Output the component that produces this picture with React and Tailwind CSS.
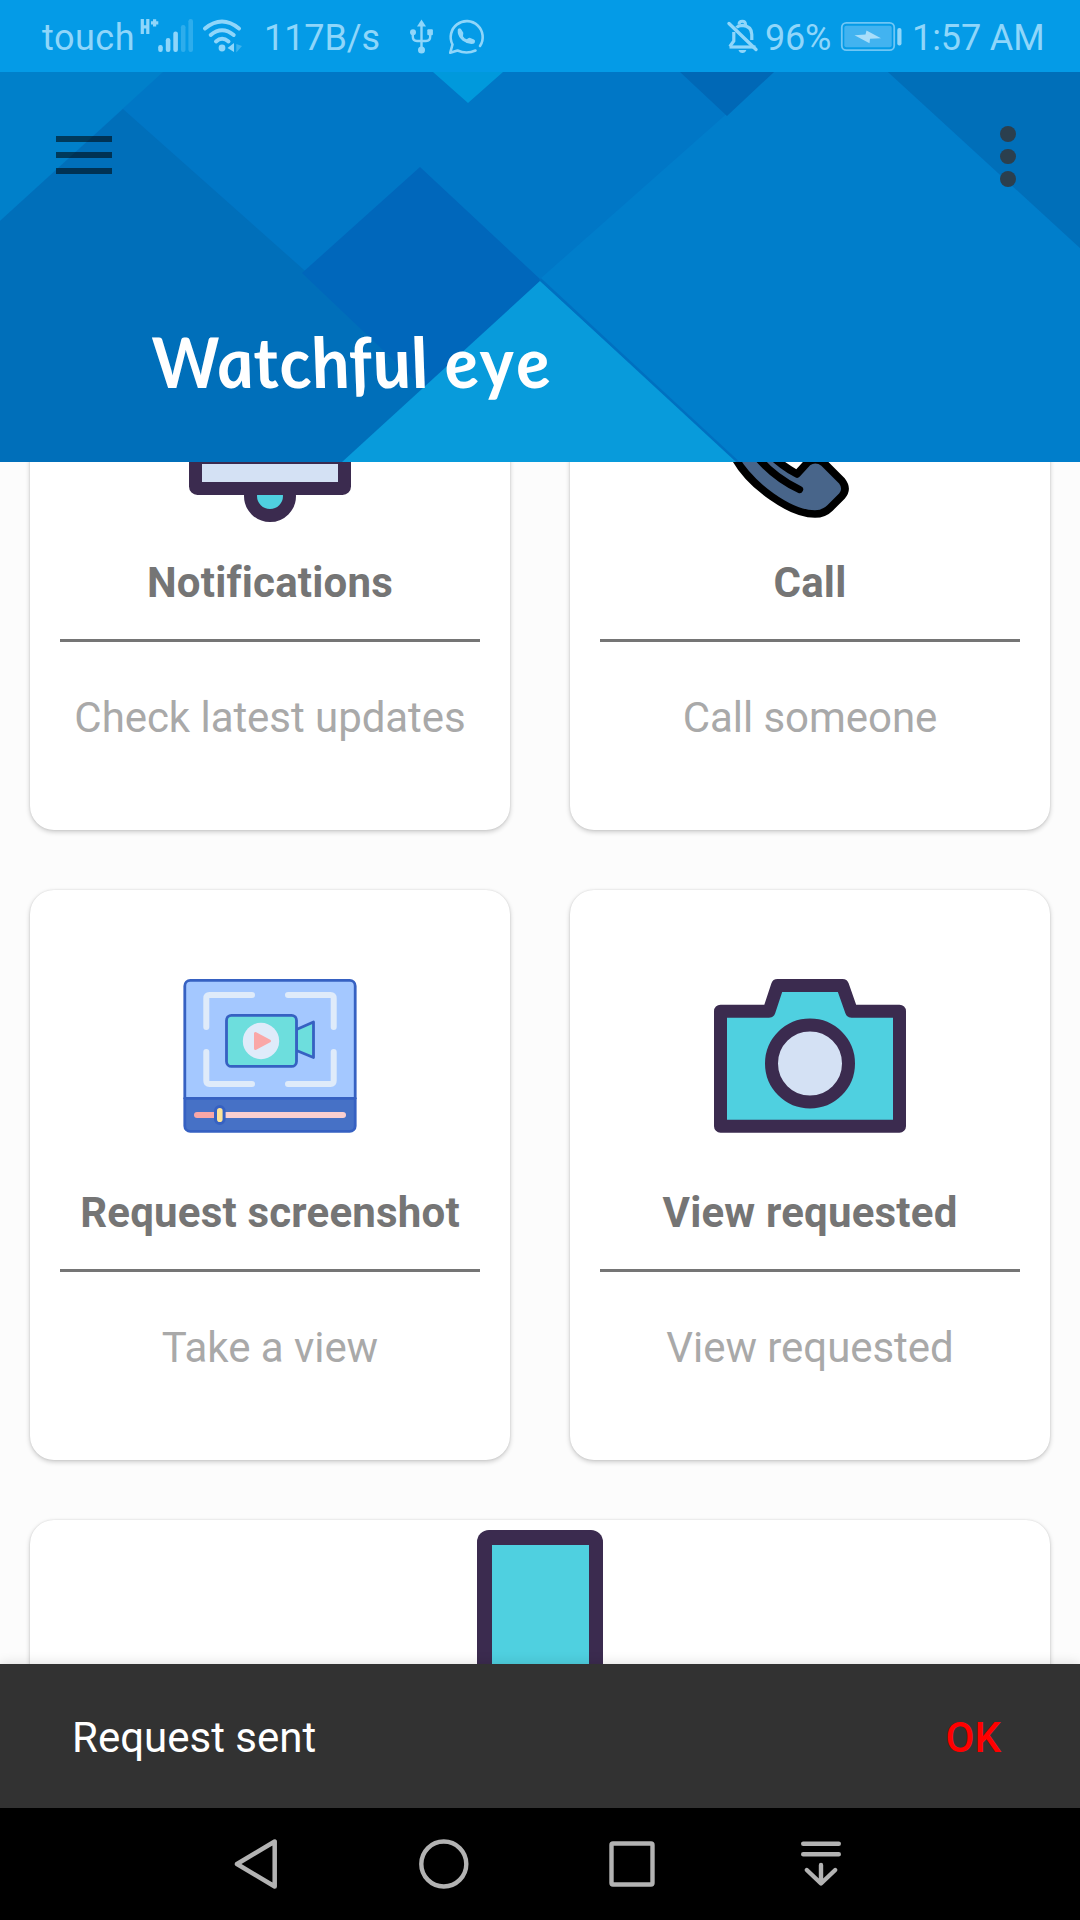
import React from "react";

const TINT = "#8fd6fa";

function SignalIcon() {
  return (
    <svg className="w-14 h-[72px] shrink-0" viewBox="140 0 56 72" fill={TINT}>
      <rect x="158.2" y="45" width="4.6" height="7" rx="2.2" />
      <rect x="165.8" y="38" width="4.6" height="14" rx="2.2" />
      <rect x="173.3" y="31.5" width="4.6" height="20.5" rx="2.2" />
      <rect x="180.900" y="25" width="4.6" height="27" rx="2.2" opacity="0.3" />
      <rect x="188.400" y="19" width="4.6" height="33" rx="2.2" opacity="0.3" />
      <path d="M142.3 19V34M147.8 19V34M142 26.8H148M151 22.800H158.3M154.6 19.3V26.500" stroke={TINT} strokeWidth="3.2" fill="none" />
    </svg>
  );
}

function WifiIcon() {
  return (
    <svg className="w-11 h-[72px] shrink-0" viewBox="200 0 44 72" fill={TINT}>
      <g fill="none" stroke={TINT} strokeWidth="4" strokeLinecap="round">
        <path d="M205 28.5Q222 14.5 239 28.5" />
        <path d="M210.7 35Q222 25.5 233.7 35" />
        <path d="M216 41.5Q222 36 228.5 41.5" />
      </g>
      <circle cx="222" cy="48" r="3.4" />
      <path d="M234 43V52L227.5 48Z" />
      <path d="M236.3 44V52.5L242 46Z" opacity="0.4" />
    </svg>
  );
}

function UsbIcon() {
  return (
    <svg className="w-7 h-[72px] shrink-0" viewBox="408 0 28 72" fill={TINT}>
      <path d="M421.5 19.5L426 26.5H417Z" />
      <path d="M421.5 25V50M412.8 33V36.5Q412.8 41 417 41H426Q430.2 41 430.2 36.5V33" fill="none" stroke={TINT} strokeWidth="2.4" />
      <circle cx="421.5" cy="50" r="3.5" />
      <circle cx="413" cy="32.3" r="3" />
      <rect x="427.3" y="29.3" width="5.6" height="6" rx="1" />
    </svg>
  );
}

function ChatIcon() {
  return (
    <svg className="w-10 h-[72px] shrink-0" viewBox="447 0 40 72" fill="none" stroke={TINT} strokeLinecap="round" strokeLinejoin="round">
      <path d="M480 46A16 16 0 1 0 452.5 44.5L450.2 52.8L457.5 50.5Q466.5 54.5 475.5 50.5" strokeWidth="2.6" />
      <path d="M459.300 30.2Q458.800 35 463.3 39.2Q468.5 43 473 42.2" strokeWidth="3.200" />
      <path d="M459.8 30.5L461.500 33.2L461.2 36M467.5 40.800L469.6 39.6L473.2 41.2" strokeWidth="3.6" />
    </svg>
  );
}

function BellOffIcon() {
  return (
    <svg className="w-9 h-[72px] shrink-0" viewBox="725 0 36 72" fill="none" stroke={TINT}>
      <path d="M729.5 47H755.5" strokeWidth="3.2" />
      <path d="M733.8 32V41L729.8 46.5M736.5 27.5Q738.5 25.3 742.2 25.3Q751.8 26 751.8 34.5V40" strokeWidth="3.2" />
      <path d="M739 24.5Q739 21.3 742.3 21.3Q745.6 21.3 745.6 25" strokeWidth="3" />
      <path d="M738.5 50H746.3Q745.5 53 742.4 53Q739.3 53 738.5 50Z" fill={TINT} stroke="none" />
      <path d="M729 23.5L756 49.5" strokeWidth="3.4" strokeLinecap="round" />
    </svg>
  );
}

function BatteryIcon() {
  return (
    <svg className="w-16 h-[72px] shrink-0" viewBox="840 0 64 72">
      <rect x="841.8" y="22.8" width="52.4" height="27.4" rx="4.5" fill="none" stroke="#6fc6f5" strokeWidth="1.8" />
      <rect x="844.3" y="25.8" width="47.4" height="21.4" rx="2" fill="#42b3f0" />
      <path d="M854.5 35.2L865.5 34.5L866.5 30.5L881 38.3L870 38.8L869.5 43.2Z" fill="#a8defa" />
      <rect x="897.3" y="28" width="4.2" height="17.5" rx="2" fill="#8fd6fa" />
    </svg>
  );
}

function StatusBar() {
  return (
    <div className="flex h-[72px] w-full items-center bg-[#049be7] text-4xl leading-[72px] text-[#8fd6fa]">
      <span className="ml-[42px] w-[98px] whitespace-nowrap pt-[3px] tracking-[0.5px]">touch</span>
      <SignalIcon />
      <div className="w-1" />
      <WifiIcon />
      <span className="ml-5 w-36 whitespace-nowrap pt-[3px] tracking-[-0.1px]">117B/s</span>
      <UsbIcon />
      <div className="w-[11px]" />
      <ChatIcon />
      <div className="ml-auto flex items-center">
        <BellOffIcon />
        <span className="ml-1 w-[75px] whitespace-nowrap pt-[3px] tracking-[-0.2px]">96%</span>
        <BatteryIcon />
        <span className="ml-2 w-[168px] whitespace-nowrap pt-[3px] tracking-[-0.1px]">1:57 AM</span>
      </div>
    </div>
  );
}

function HeaderArt() {
  return (
    <svg className="absolute inset-0 h-full w-full" viewBox="0 72 1080 390">
      <rect x="0" y="72" width="1080" height="390" fill="#0077c6" />
      <path d="M0 72H163L0 221Z" fill="#0080ca" />
      <path d="M123 109L0 221V462H520Z" fill="#006fba" />
      <path d="M420 167L302 273L425 390L541 280Z" fill="#0067bb" />
      <path d="M433 72H503L468 103Z" fill="#0099dc" />
      <path d="M540 279L774 72H888L1080 248V462H738Z" fill="#007ecb" />
      <path d="M680 72H774L727 116Z" fill="#0068b6" />
      <path d="M888 72H1080V248Z" fill="#006fb9" />
      <path d="M540 281L342 462H738Z" fill="#089bdb" />
      <path d="M540 279L739 463" stroke="#0070c0" strokeWidth="2.5" />
    </svg>
  );
}

function Header() {
  return (
    <header className="relative z-10 flex h-[390px] flex-col justify-between overflow-hidden">
      <HeaderArt />
      <div className="relative flex items-start justify-between pl-14 pr-16 pt-[30px]">
        <div className="mt-[34px] flex w-14 flex-col gap-2.5">
          <div className="h-1.5 bg-black/55" />
          <div className="h-1.5 bg-black/55" />
          <div className="h-1.5 bg-black/55" />
        </div>
        <div className="mt-6 flex w-4 flex-col gap-[7px]">
          <div className="h-[15.5px] w-[15.5px] rounded-full bg-[#2b3f4e]" />
          <div className="h-[15.5px] w-[15.5px] rounded-full bg-[#2b3f4e]" />
          <div className="h-[15.5px] w-[15.5px] rounded-full bg-[#2b3f4e]" />
        </div>
      </div>
      <h1 className="relative mb-[61px] ml-[158px] w-[399px] origin-bottom-left -skew-x-[-9deg] whitespace-nowrap font-[Lato,sans-serif] text-[70px] font-bold italic leading-[80px] tracking-[0.5px] text-white">
        Watchful <span className="tracking-[2.5px]">eye</span>
      </h1>
    </header>
  );
}

function BellArt() {
  return (
    <svg className="h-[210px] w-60" viewBox="150 320 240 210">
      <circle cx="270" cy="496" r="19.5" fill="#4fd0e0" stroke="#3b2b4f" strokeWidth="13" />
      <path d="M215 462V405Q215 350 270 350Q325 350 325 405V462Z" fill="#4fd0e0" stroke="#3b2b4f" strokeWidth="13" />
      <rect x="195.5" y="457.500" width="149" height="31" rx="2" fill="#d4e1f4" stroke="#3b2b4f" strokeWidth="13" strokeLinejoin="round" />
    </svg>
  );
}

function PhoneArt() {
  return (
    <svg className="h-[210px] w-60" viewBox="690 320 240 210" fill="none" stroke="#000" strokeLinecap="round" strokeLinejoin="round">
      <path
        d="M735 458C751 486 790 514 815 514Q824 514 830 508L842 496Q848 489 842 481L824 463Q816 457 808 462L797 474Q782 466 770 454Q756 438 748 424L760 410Q764 402 758 395L742 380Q734 374 727 380L716 392Q708 400 712 413Q717 434 735 458Z"
        fill="#48658a"
        strokeWidth="7.6"
      />
      <path d="M745 440Q765 473 799.5 489.5" strokeWidth="7.4" />
    </svg>
  );
}

function RecorderArt() {
  return (
    <svg className="h-[210px] w-60" viewBox="150 950 240 210" strokeLinecap="round" strokeLinejoin="round">
      <rect x="184.8" y="980.4" width="170.4" height="151" rx="5.5" fill="#a4c8ff" />
      <path d="M184.8 1098.3H355.2V1126Q355.2 1131.4 349.7 1131.4H190.3Q184.8 1131.4 184.8 1126Z" fill="#4671c6" />
      <path d="M184.8 1098.3H355.2" stroke="#3661c2" strokeWidth="2.8" />
      <rect x="184.8" y="980.4" width="170.4" height="151" rx="5.5" fill="none" stroke="#3661c2" strokeWidth="2.8" />
      <path
        d="M252 995H209.500Q206.300 995 206.300 998.500V1027M288 995H330.500Q333.700 995 333.700 998.500V1027M206.300 1052V1080.500Q206.300 1084 209.500 1084H252M288 1084H330.500Q333.700 1084 333.700 1080.500V1052"
        fill="none"
        stroke="#dfebfa"
        strokeWidth="6"
      />
      <path d="M296.500 1029.500L313.500 1022V1057.500L296.500 1050.500Z" fill="#6ddedd" stroke="#3661c2" strokeWidth="2.8" />
      <rect x="226.500" y="1015.400" width="70" height="51" rx="5" fill="#6ddedd" stroke="#3661c2" strokeWidth="2.8" />
      <circle cx="261" cy="1041" r="18.200" fill="#dfebfa" />
      <path d="M255.500 1033.500V1048.500L269.500 1041Z" fill="#faa7a7" stroke="#faa7a7" strokeWidth="3" />
      <path d="M197 1115H241.500" stroke="#f9a7a7" strokeWidth="6" />
      <path d="M227 1115H343" stroke="#facfd0" strokeWidth="6" />
      <rect x="215.500" y="1106.500" width="8.600" height="17" rx="4.300" fill="#fde498" stroke="#3661c2" strokeWidth="3" />
    </svg>
  );
}

function CameraArt() {
  return (
    <svg className="h-[210px] w-60" viewBox="690 950 240 210" stroke="#3b2b4f" strokeWidth="13">
      <path
        d="M720.500 1011.200H769L777.500 985.500H842.500L851.500 1011.200H899.500V1126.200H720.500Z"
        fill="#4fd0e0"
        strokeLinejoin="round"
      />
      <circle cx="810" cy="1063.500" r="38.500" fill="#d4e1f4" />
    </svg>
  );
}

const SHADOW = "shadow-[0_2px_5px_rgba(0,0,0,0.2),0_0_2px_rgba(0,0,0,0.12)]";

function Card({ art, title, subtitle }) {
  return (
    <section className={`flex h-[570px] flex-col items-center rounded-3xl bg-white pt-[60px] ${SHADOW}`}>
      {art}
      <h2 className="mt-7 whitespace-nowrap text-[42px] font-bold leading-[49px] tracking-[0.2px] text-[#757575]">{title}</h2>
      <div className="mt-8 h-[3px] w-[420px] bg-[#757575]" />
      <p className="mt-[51px] whitespace-nowrap text-[42px] leading-[49px] tracking-[-0.05px] text-[#a9a9a9]">{subtitle}</p>
    </section>
  );
}

function DeviceCard() {
  return (
    <section className={`col-span-2 flex h-[570px] flex-col items-center rounded-3xl bg-white pt-2.5 ${SHADOW}`}>
      <div className="h-[230px] w-[126px] rounded-xl bg-[#3b2b4f] px-[14.5px] py-[14.5px]">
        <div className="h-full bg-[#4fd0e0]" />
      </div>
    </section>
  );
}

function Snackbar() {
  return (
    <div className="relative z-10 flex h-36 items-center justify-between bg-[#323232] pl-[72px] pr-[79px] pt-0.5 text-[42px] leading-[49px] shadow-[0_0_12px_rgba(0,0,0,0.14)]">
      <span className="text-white">Request sent</span>
      <button className="font-medium text-[#ff0000]">OK</button>
    </div>
  );
}

function NavBar() {
  return (
    <nav className="relative z-10 flex h-28 items-center bg-black pl-[226px] text-[#b3b3b3]">
      <svg className="h-15 w-15" viewBox="226 1834 60 60" fill="none" stroke="currentColor" strokeWidth="4.5" strokeLinejoin="round">
        <path d="M274.700 1841.500V1886.500L237 1864Z" />
      </svg>
      <svg className="ml-[128px] h-15 w-15" viewBox="414 1834 60 60" fill="none" stroke="currentColor" strokeWidth="4.400">
        <circle cx="443.800" cy="1864" r="22.500" />
      </svg>
      <svg className="ml-[128px] h-15 w-15" viewBox="602 1834 60 60" fill="none" stroke="currentColor" strokeWidth="4.400">
        <rect x="611.500" y="1843.500" width="41" height="41" rx="1.500" />
      </svg>
      <svg className="ml-[129px] h-15 w-15" viewBox="791 1834 60 60" fill="none" stroke="currentColor" strokeWidth="4.400" strokeLinecap="round" strokeLinejoin="round">
        <path d="M803.200 1843.700H838.800M803.200 1854.200H838.800M821 1865V1883M806.800 1870L821 1883.500L835.200 1870" />
      </svg>
    </nav>
  );
}

export default function App() {
  return (
    <div className="flex h-[1920px] w-[1080px] flex-col overflow-hidden bg-[#fcfcfc] font-[Roboto,sans-serif]">
      <StatusBar />
      <Header />
      <main className="h-[1202px] shrink-0">
        <div className="-mt-[202px] grid grid-cols-2 gap-[60px] px-[30px]">
          <Card art={<BellArt />} title="Notifications" subtitle="Check latest updates" />
          <Card art={<PhoneArt />} title="Call" subtitle="Call someone" />
          <Card art={<RecorderArt />} title="Request screenshot" subtitle="Take a view" />
          <Card art={<CameraArt />} title="View requested" subtitle="View requested" />
          <DeviceCard />
        </div>
      </main>
      <Snackbar />
      <NavBar />
    </div>
  );
}
